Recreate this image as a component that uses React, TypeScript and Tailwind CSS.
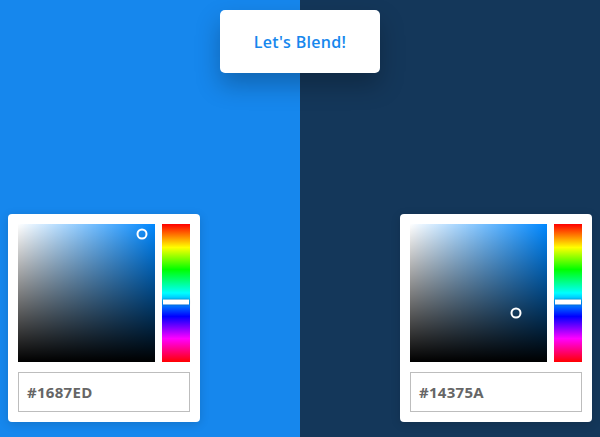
import React from "react";

function Picker({ hex, px, py, huePos }: { hex: string; px: number; py: number; huePos: number }) {
  return (
    <div className="w-[192px] h-[208px] bg-white rounded-[4px] p-[10px] flex flex-col gap-[10px] shadow-[0_2px_10px_rgba(0,0,0,0.15)]">
      <div className="flex gap-[7px] h-[138px]">
        <div className="relative flex-1 h-full bg-[rgb(0,136,255)]">
          <div className="absolute inset-0 bg-gradient-to-r from-white to-transparent" />
          <div className="absolute inset-0 bg-gradient-to-b from-transparent to-black" />
          <div
            className="absolute w-[11px] h-[11px] rounded-full border-2 border-white -translate-x-1/2 -translate-y-1/2"
            style={{ left: px, top: py }}
          />
        </div>
        <div className="relative w-[28px] h-full bg-[linear-gradient(to_bottom,#ff0000_0%,#ffff00_17%,#00ff00_33%,#00ffff_50%,#0000ff_67%,#ff00ff_83%,#ff0000_100%)]">
          <div
            className="absolute left-[1px] right-[1px] h-[5px] bg-white -translate-y-1/2 shadow-[0_0_2px_rgba(0,0,0,0.4)]"
            style={{ top: huePos }}
          />
        </div>
      </div>
      <div className="h-[40px] border border-[#bdbdbd] flex items-center pl-[8px]">
        <span className="text-[15px] font-bold text-[#666] tracking-[0.3px]" style={{ fontFamily: '"Open Sans", sans-serif' }}>
          {hex}
        </span>
      </div>
    </div>
  );
}

export default function App() {
  return (
    <div className="relative w-[600px] h-[437px] flex overflow-hidden" style={{ fontFamily: '"Open Sans", sans-serif' }}>
      <div className="w-[300px] h-full bg-[#1687ED] flex items-end pl-[8px] pb-[15px]">
        <Picker hex="#1687ED" px={124} py={10} huePos={78} />
      </div>
      <div className="w-[300px] h-full bg-[#14375A] flex items-end justify-end pr-[8px] pb-[15px]">
        <Picker hex="#14375A" px={106} py={89} huePos={78} />
      </div>
      <div className="absolute left-[220px] top-[10px] w-[160px] h-[63px] bg-white rounded-[5px] flex items-center justify-center shadow-[0_12px_24px_rgba(0,0,0,0.25)]">
        <span className="text-[#1687ED] text-[16px] font-semibold tracking-[0.3px]">Let's Blend!</span>
      </div>
    </div>
  );
}
